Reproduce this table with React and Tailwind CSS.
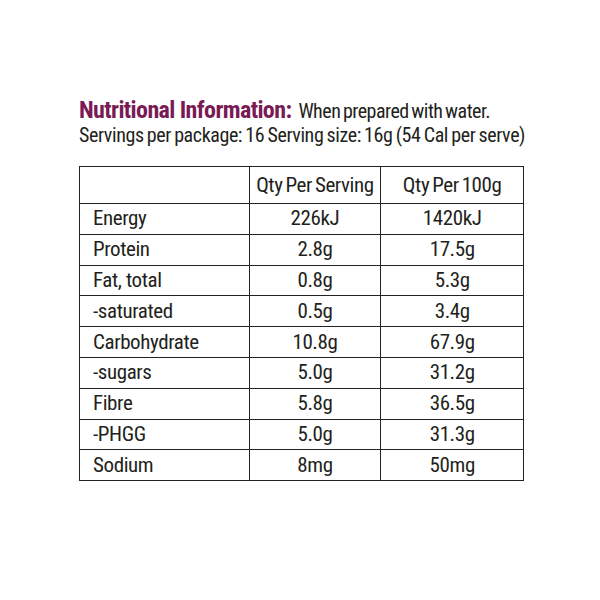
import React from 'react';

const rows = [
  ['Energy', '226kJ', '1420kJ'],
  ['Protein', '2.8g', '17.5g'],
  ['Fat, total', '0.8g', '5.3g'],
  ['-saturated', '0.5g', '3.4g'],
  ['Carbohydrate', '10.8g', '67.9g'],
  ['-sugars', '5.0g', '31.2g'],
  ['Fibre', '5.8g', '36.5g'],
  ['-PHGG', '5.0g', '31.3g'],
  ['Sodium', '8mg', '50mg'],
];

const cell = 'border-[1.5px] border-[#222]';

export default function App() {
  return (
    <div className="flex w-[600px] h-[600px] bg-white text-[#231f20] font-['Roboto_Condensed',sans-serif]">
      <div className="flex flex-col pt-[97px] pl-[79px]">
        <div className="flex items-baseline whitespace-nowrap h-[27px] text-[24px] leading-[27px]">
          <span className="font-bold text-[#7a1a55] tracking-[-0.6px]">Nutritional Information:</span>
          <span className="text-[20px] ml-[7px] tracking-[-0.5px] [word-spacing:-1.5px]">When prepared with water.</span>
        </div>
        <p className="text-[20px] leading-[22px] whitespace-nowrap tracking-[-0.4px] [word-spacing:-1px]">
          Servings per package: 16 Serving size: 16g (54 Cal per serve)
        </p>
        <table className="mt-[20px] w-[445px] border-collapse text-[21px] leading-none tracking-[-0.4px]">
          <thead>
            <tr className="h-[37px]">
              <th className={'w-[170px] ' + cell}></th>
              <th className={'w-[132px] font-normal whitespace-nowrap [word-spacing:-1.5px] ' + cell}>Qty Per Serving</th>
              <th className={'w-[143px] font-normal whitespace-nowrap [word-spacing:-1.5px] ' + cell}>Qty Per 100g</th>
            </tr>
          </thead>
          <tbody>
            {rows.map(([name, serv, per100]) => (
              <tr key={name} className="h-[30.8px]">
                <td className={'pl-[13px] ' + cell}>{name}</td>
                <td className={'text-center ' + cell}>{serv}</td>
                <td className={'text-center ' + cell}>{per100}</td>
              </tr>
            ))}
          </tbody>
        </table>
      </div>
    </div>
  );
}
